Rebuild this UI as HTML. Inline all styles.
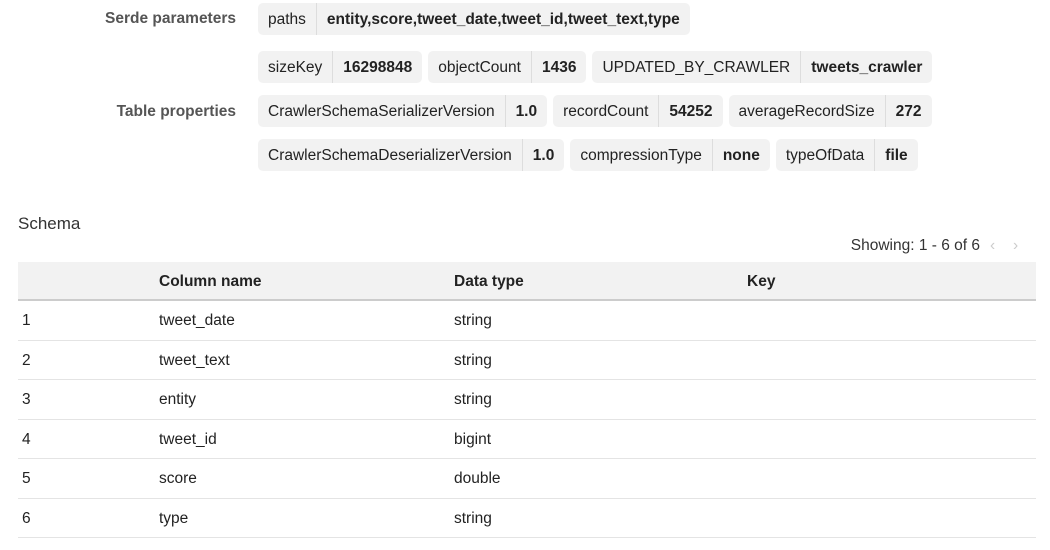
<!DOCTYPE html>
<html><head><style>
body{margin:0;width:1050px;height:550px;background:#fff;font-family:"Liberation Sans",Arial,sans-serif;font-size:15.5px;color:#222;position:relative;overflow:hidden}
.lbl{position:absolute;font-weight:bold;color:#555;text-align:right;width:236px;left:0}
.row{position:absolute;left:258px;display:flex;gap:6px}
.tag{display:flex;background:#f2f2f2;border-radius:5px;height:32px;line-height:34px}
.tag span{padding:0 10px}
.tag span+span{border-left:1px solid #ddd;font-weight:bold}
.schema{position:absolute;left:18px;top:214px;font-size:17px;color:#333}
.show{position:absolute;right:70px;top:237px;color:#333}
.arr{position:absolute;top:237px;color:#ccc}
table{position:absolute;left:18px;top:262px;width:1018px;border-collapse:collapse}
th{background:#f2f2f2;text-align:left;font-weight:bold;height:35px;border-bottom:2px solid #ccc;padding:2px 0 0}
td{height:36.5px;border-bottom:1px solid #e4e4e4;padding:2px 0 0}
th:first-child,td:first-child{width:137px;padding-left:4px}
th:nth-child(2),td:nth-child(2){width:295px}
th:nth-child(3),td:nth-child(3){width:293px}
</style></head><body>
<div class="lbl" style="top:10px">Serde parameters</div>
<div class="row" style="top:3px"><div class="tag"><span>paths</span><span>entity,score,tweet_date,tweet_id,tweet_text,type</span></div></div>
<div class="row" style="top:51px"><div class="tag"><span>sizeKey</span><span>16298848</span></div><div class="tag"><span>objectCount</span><span>1436</span></div><div class="tag"><span>UPDATED_BY_CRAWLER</span><span>tweets_crawler</span></div></div>
<div class="lbl" style="top:103px">Table properties</div>
<div class="row" style="top:95px"><div class="tag"><span>CrawlerSchemaSerializerVersion</span><span>1.0</span></div><div class="tag"><span>recordCount</span><span>54252</span></div><div class="tag"><span>averageRecordSize</span><span>272</span></div></div>
<div class="row" style="top:139px"><div class="tag"><span>CrawlerSchemaDeserializerVersion</span><span>1.0</span></div><div class="tag"><span>compressionType</span><span>none</span></div><div class="tag"><span>typeOfData</span><span>file</span></div></div>
<div class="schema">Schema</div>
<div class="show">Showing: 1 - 6 of 6</div>
<div class="arr" style="left:990px">&#8249;</div><div class="arr" style="left:1013px">&#8250;</div>
<table>
<tr><th></th><th>Column name</th><th>Data type</th><th>Key</th></tr>
<tr><td>1</td><td>tweet_date</td><td>string</td><td></td></tr>
<tr><td>2</td><td>tweet_text</td><td>string</td><td></td></tr>
<tr><td>3</td><td>entity</td><td>string</td><td></td></tr>
<tr><td>4</td><td>tweet_id</td><td>bigint</td><td></td></tr>
<tr><td>5</td><td>score</td><td>double</td><td></td></tr>
<tr><td>6</td><td>type</td><td>string</td><td></td></tr>
</table>
</body></html>
